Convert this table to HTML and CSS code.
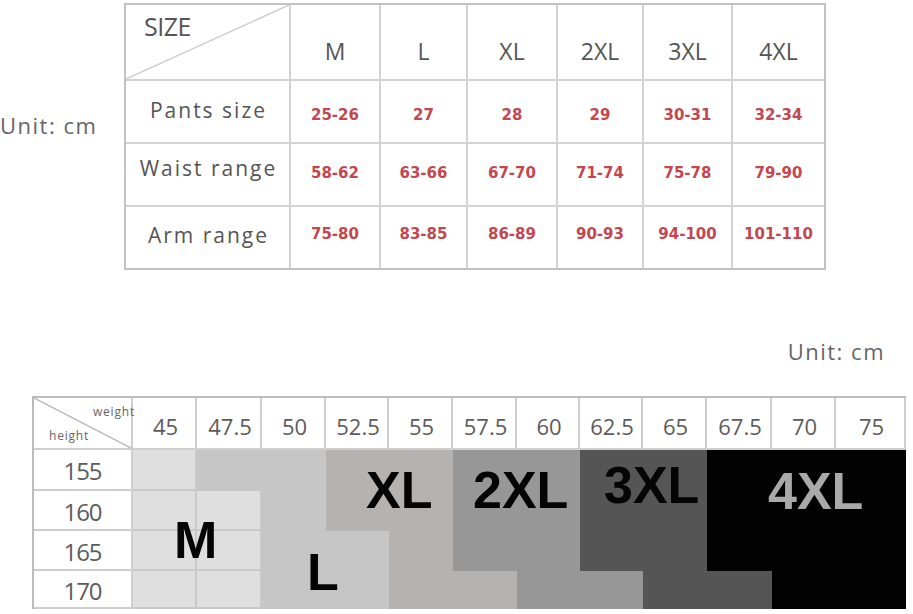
FILE: index.html
```html
<!DOCTYPE html>
<html lang="en">
<head>
<meta charset="utf-8">
<title>Size chart</title>
<link rel="stylesheet" href="styles.css">
</head>
<body>
<div class="page">
  <section class="top">
    <div class="unit unit-left">Unit: cm</div>
    <div class="size-table">
      <div class="row">
        <div class="cell corner">
          <svg class="diag" viewBox="0 0 100 100" preserveAspectRatio="none"><line x1="0" y1="100" x2="100" y2="0" vector-effect="non-scaling-stroke"/></svg>
          <span class="size-word">SIZE</span>
        </div>
        <div class="cell head">M</div>
        <div class="cell head">L</div>
        <div class="cell head">XL</div>
        <div class="cell head">2XL</div>
        <div class="cell head">3XL</div>
        <div class="cell head">4XL</div>
      </div>

      <div class="row r-pants">
        <div class="cell label">Pants size</div>
        <div class="cell val">25-26</div>
        <div class="cell val">27</div>
        <div class="cell val">28</div>
        <div class="cell val">29</div>
        <div class="cell val">30-31</div>
        <div class="cell val">32-34</div>
      </div>

      <div class="row r-waist">
        <div class="cell label">Waist range</div>
        <div class="cell val">58-62</div>
        <div class="cell val">63-66</div>
        <div class="cell val">67-70</div>
        <div class="cell val">71-74</div>
        <div class="cell val">75-78</div>
        <div class="cell val">79-90</div>
      </div>

      <div class="row r-arm">
        <div class="cell label">Arm range</div>
        <div class="cell val">75-80</div>
        <div class="cell val">83-85</div>
        <div class="cell val">86-89</div>
        <div class="cell val">90-93</div>
        <div class="cell val">94-100</div>
        <div class="cell val">101-110</div>
      </div>
    </div>
  </section>

  <div class="unit unit-right">Unit: cm</div>

  <div class="chart">
    <div class="g corner2">
      <svg class="diag2" viewBox="0 0 100 100" preserveAspectRatio="none"><line x1="0" y1="0" x2="100" y2="100" vector-effect="non-scaling-stroke"/></svg>
      <span class="w-word">weight</span>
      <span class="h-word">height</span>
    </div>
    <div class="g wt">45</div>
    <div class="g wt">47.5</div>
    <div class="g wt">50</div>
    <div class="g wt">52.5</div>
    <div class="g wt">55</div>
    <div class="g wt">57.5</div>
    <div class="g wt">60</div>
    <div class="g wt">62.5</div>
    <div class="g wt">65</div>
    <div class="g wt">67.5</div>
    <div class="g wt">70</div>
    <div class="g wt">75</div>

    <div class="g ht">155</div>
    <div class="g s-m"></div>
    <div class="g s-l"></div><div class="g s-l"></div>
    <div class="g s-xl"></div><div class="g s-xl"></div>
    <div class="g s-2xl"></div><div class="g s-2xl"></div>
    <div class="g s-3xl"></div><div class="g s-3xl"></div>
    <div class="g s-4xl"></div><div class="g s-4xl"></div><div class="g s-4xl"></div>

    <div class="g ht">160</div>
    <div class="g s-m"></div><div class="g s-m"></div>
    <div class="g s-l"></div>
    <div class="g s-xl"></div><div class="g s-xl"></div>
    <div class="g s-2xl"></div><div class="g s-2xl"></div>
    <div class="g s-3xl"></div><div class="g s-3xl"></div>
    <div class="g s-4xl"></div><div class="g s-4xl"></div><div class="g s-4xl"></div>

    <div class="g ht">165</div>
    <div class="g s-m"></div><div class="g s-m"></div>
    <div class="g s-l"></div><div class="g s-l"></div>
    <div class="g s-xl"></div>
    <div class="g s-2xl"></div><div class="g s-2xl"></div>
    <div class="g s-3xl"></div><div class="g s-3xl"></div>
    <div class="g s-4xl"></div><div class="g s-4xl"></div><div class="g s-4xl"></div>

    <div class="g ht">170</div>
    <div class="g s-m"></div><div class="g s-m"></div>
    <div class="g s-l"></div><div class="g s-l"></div>
    <div class="g s-xl"></div><div class="g s-xl"></div>
    <div class="g s-2xl"></div><div class="g s-2xl"></div>
    <div class="g s-3xl"></div><div class="g s-3xl"></div>
    <div class="g s-4xl"></div><div class="g s-4xl"></div>

    <span class="big big-m">M</span>
    <span class="big big-l">L</span>
    <span class="big big-xl">XL</span>
    <span class="big big-2xl">2XL</span>
    <span class="big big-3xl">3XL</span>
    <span class="big big-4xl">4XL</span>
  </div>
</div>
</body>
</html>
```

FILE: styles.css
```css
* { box-sizing: border-box; }

body {
  margin: 0;
  background: #ffffff;
  font-family: "Open Sans", "Noto Sans", sans-serif;
  color: #5a5a5a;
}

.page {
  width: 913px;
}

/* ---------- top section ---------- */
.top {
  display: flex;
  align-items: flex-start;
  padding-top: 3px;
}

.unit {
  font-size: 22px;
  line-height: 30px;
  letter-spacing: 1.5px;
  color: #666666;
}

.unit-left {
  width: 124px;
  margin-top: 107px;
}

.size-table {
  display: grid;
  grid-template-columns: 163px 88px 85px 88px 84px 87px 91px;
  grid-template-rows: 74px 61px 61px 61px;
  gap: 2px;
  background: #d3d3d3;
  border: 2px solid #c2c2c2;
}

.row {
  display: contents;
}

.cell {
  background: #ffffff;
  display: flex;
  justify-content: center;
  align-items: center;
}

.corner {
  position: relative;
  align-items: flex-start;
  justify-content: flex-start;
  padding: 6px 0 0 18px;
}

.diag {
  position: absolute;
  left: 0;
  top: 0;
  width: 100%;
  height: 100%;
}

.diag line {
  stroke: #cdcdcd;
  stroke-width: 1.5;
}

.size-word {
  position: relative;
  font-size: 25px;
  line-height: 30px;
  letter-spacing: -0.5px;
  color: #555555;
}

.head {
  align-items: flex-start;
  padding-top: 31px;
  font-size: 23px;
  line-height: 30px;
  color: #555555;
}

.label {
  font-size: 21px;
  line-height: 28px;
  letter-spacing: 2px;
  color: #555555;
  padding-left: 2px;
}

.val {
  font-family: "DejaVu Sans", "Verdana", sans-serif;
  font-weight: bold;
  font-size: 15px;
  line-height: 20px;
  color: #c4464f;
}

.r-pants .label { padding-bottom: 4px; }
.r-pants .val { padding-top: 6px; }
.r-waist .label { padding-bottom: 14px; }
.r-waist .val { padding-bottom: 4px; }
.r-arm .label { padding-bottom: 6px; }
.r-arm .val { padding-bottom: 8px; }

.unit-right {
  margin-top: 66px;
  text-align: right;
  padding-right: 28px;
}

/* ---------- bottom chart ---------- */
.chart {
  position: relative;
  margin: 30px 0 0 32px;
  width: fit-content;
  display: grid;
  grid-template-columns: 99px 64px 65px 64px 63px 64px 64px 63px 63px 64px 65px 64px 70px;
  grid-template-rows: 52px 41px 40px 40px 38px;
  border-top: 2px solid #bcbcbc;
  border-left: 2px solid #bcbcbc;
}

.g {
  border-right: 2px solid #cfcfcf;
  border-bottom: 2px solid #cfcfcf;
  background: #ffffff;
}

.corner2 {
  position: relative;
}

.diag2 {
  position: absolute;
  left: 0;
  top: 0;
  width: 100%;
  height: 100%;
}

.diag2 line {
  stroke: #b9b9b9;
  stroke-width: 1.5;
}

.w-word,
.h-word {
  position: absolute;
  font-size: 12px;
  line-height: 16px;
  letter-spacing: 0.8px;
  color: #666666;
}

.w-word {
  right: -4px;
  top: 6px;
}

.h-word {
  left: 15px;
  top: 30px;
}

.wt {
  display: flex;
  justify-content: center;
  align-items: center;
  padding-top: 5px;
  padding-left: 3px;
  font-size: 22px;
  line-height: 30px;
  color: #5c5c5c;
}

.ht {
  display: flex;
  justify-content: center;
  align-items: center;
  padding-top: 3px;
  font-size: 24px;
  line-height: 30px;
  letter-spacing: -1px;
  color: #5c5c5c;
}

.s-m { background: #dfdfdf; border-color: #c9c9c9; }
.s-l { background: #c6c6c6; border-color: transparent; }
.s-xl { background: #b5b2b2; border-color: transparent; }
.s-2xl { background: #979797; border-color: transparent; }
.s-3xl { background: #555555; border-color: transparent; }
.s-4xl { background: #020202; border-color: transparent; }

.big {
  position: absolute;
  font-family: "Liberation Sans", Arial, sans-serif;
  font-weight: bold;
  font-size: 52px;
  line-height: 52px;
  color: #050505;
  white-space: nowrap;
}

.big-m { left: 140px; top: 116px; }
.big-l { left: 273px; top: 148px; }
.big-xl { left: 332px; top: 66px; }
.big-2xl { left: 439px; top: 66px; }
.big-3xl { left: 570px; top: 61px; }
.big-4xl { left: 734px; top: 67px; color: #a9a9a9; }
```
